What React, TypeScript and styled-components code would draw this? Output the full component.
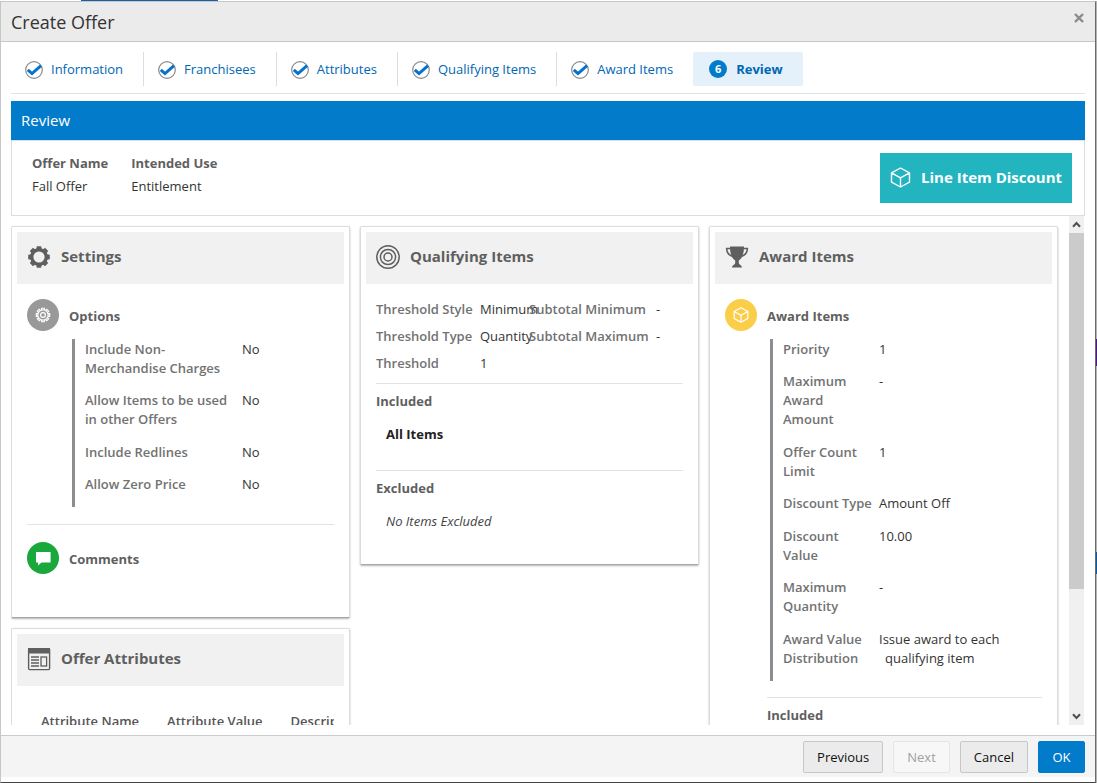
import React from 'react';
import styled, { createGlobalStyle, css } from 'styled-components';

const GlobalStyle = createGlobalStyle`
  *, *::before, *::after { box-sizing: border-box; }
  body {
    margin: 0;
    background: #c3c3c3;
    color: #333;
    font: 13px/19px 'Open Sans', 'Noto Sans', sans-serif;
  }
  h1, h2, h3, p, ol, dl, dd { margin: 0; padding: 0; }
  button { font: inherit; }
`;

const Page = styled.div`
  height: 100vh;
  min-height: 480px;
  display: grid;
  grid-template: 1px minmax(0, 1fr) / minmax(0, 1fr) 1px;
`;

const TopStrip = styled.div`
  grid-column: 1 / -1;
  background: linear-gradient(#1b5faa, #1b5faa) 81px 0 / 137px 1px no-repeat #fff;
`;

const SideStrip = styled.div`
  background:
    linear-gradient(#4b1a7c, #4b1a7c) 0 338px / 1px 27px no-repeat,
    linear-gradient(#0a5aa0, #0a5aa0) 0 551px / 1px 22px no-repeat,
    #b4b4b4;
`;

const Dialog = styled.section`
  display: flex;
  flex-direction: column;
  min-height: 0;
  background: #fff;
  border: solid #c4c8c9;
  border-width: 1px 0 0 1px;
  border-right: 1px solid #6b6b6b;
  border-bottom: 1px solid #444;
`;

const TitleBar = styled.header`
  display: flex;
  justify-content: space-between;
  align-items: flex-start;
  flex: none;
  height: 40px;
  padding: 8px 10px 0;
  background: #ebebeb;
  border-bottom: 1px solid #c4c8c9;
`;

const Title = styled.h1`
  font-size: 18px;
  line-height: 24px;
  font-weight: 400;
  color: #333;
`;

const CloseButton = styled.button`
  display: flex;
  padding: 3px 1px;
  border: 0;
  background: none;
`;

const Body = styled.div`
  flex: 1;
  min-height: 0;
  display: flex;
  flex-direction: column;
  padding: 0 10px;
`;

const Steps = styled.ol`
  display: flex;
  list-style: none;
  padding: 10px 0 7px;
  margin-bottom: 7px;
  border-bottom: 1px solid #dfe3e5;
`;

const Step = styled.li<{ $current?: boolean; $last?: boolean }>`
  height: 34px;
  border-right: ${p => (p.$current || p.$last ? 0 : '1px solid #d6dfe6')};
  border-radius: ${p => (p.$current ? '2px' : 0)};
  background: ${p => (p.$current ? '#e4f0fa' : 'none')};
`;

const StepLink = styled.a<{ $current?: boolean }>`
  display: flex;
  align-items: center;
  gap: ${p => (p.$current ? 9 : 8)}px;
  height: 34px;
  padding: ${p => (p.$current ? '0 20px 0 16px' : '0 20px 0 14px')};
  color: #0067b3;
  font-weight: ${p => (p.$current ? 700 : 400)};
  text-decoration: none;
  svg { margin-top: 2px; }
`;

const StepNumber = styled.span`
  width: 18px;
  height: 18px;
  border-radius: 50%;
  background: #027bcb;
  color: #fff;
  font-size: 11px;
  line-height: 18px;
  text-align: center;
`;

const Banner = styled.h2`
  padding: 10px;
  background: #027bcb;
  color: #fff;
  font-size: 15px;
  line-height: 19px;
  font-weight: 400;
`;

const Summary = styled.div`
  display: flex;
  justify-content: space-between;
  align-items: flex-start;
  padding: 12px;
  border: 1px solid #d6dfe6;
`;

const Facts = styled.dl`
  display: flex;
  gap: 23px;
  padding: 1px 8px 0;
`;

const Fact = styled.div`
  dt { font-weight: 700; color: #5f5f5f; margin-bottom: 4px; }
`;

const OfferType = styled.p`
  display: flex;
  align-items: center;
  gap: 10px;
  height: 50px;
  padding: 0 10px 2px;
  background: #22b5bf;
  color: #fff;
  font-size: 15px;
  font-weight: 700;
`;

const ScrollFrame = styled.div`
  flex: 1;
  min-height: 0;
  display: flex;
  margin-bottom: 10px;
`;

const Cards = styled.div`
  flex: 1;
  min-width: 0;
  display: grid;
  grid-template-columns: 339fr 339fr 349fr;
  gap: 10px;
  align-items: start;
  padding: 10px 11px 10px 0;
  overflow-y: auto;
  scrollbar-width: none;
`;

const CardColumn = styled.div`
  display: grid;
  gap: 10px;
  min-width: 0;
`;

const Card = styled.article<{ $bottom: number }>`
  min-width: 0;
  padding: 5px 5px ${p => p.$bottom}px;
  background: #fff;
  border: 1px solid #dcdcdc;
  border-bottom-color: #a8a8a8;
  border-radius: 2px;
  box-shadow: 0 1px 2px rgba(0, 0, 0, 0.3);
`;

const CardHeader = styled.header`
  display: flex;
  align-items: center;
  gap: 10px;
  height: 52px;
  padding: 0 10px 2px;
  background: #f1f1f1;
`;

const CardTitle = styled.h2`
  padding-bottom: 2px;
  font-size: 15px;
  line-height: 20px;
  font-weight: 700;
  color: #5f5f5f;
`;

const CardContent = styled.div<{ $top: number }>`
  padding: ${p => p.$top}px 10px 0;
`;

const SectionHeading = styled.div`
  display: flex;
  align-items: center;
  gap: 10px;
  h3 { padding-top: 2px; }
`;

const SectionTitle = styled.h3`
  font-size: 13px;
  line-height: 19px;
  font-weight: 700;
  color: #5f5f5f;
`;

const Badge = styled.span<{ $color: string }>`
  display: flex;
  align-items: center;
  justify-content: center;
  width: 32px;
  height: 32px;
  border-radius: 50%;
  background: ${p => p.$color};
`;

const labelText = css`
  font-weight: 600;
  color: #727272;
`;

const Details = styled.dl<{ $label: number }>`
  margin: 8px 0 0 45px;
  padding: 1px 0 0 10px;
  border-left: 3px solid #8b8d8e;

  > div {
    display: grid;
    grid-template-columns: ${p => p.$label}px minmax(0, 1fr);
    padding-bottom: 13px;
  }
  > div:nth-child(even) { padding-bottom: 14px; }
  > div:last-child { padding-bottom: 13px; }
  dt { ${labelText} padding-right: 6px; }
  dd { padding-left: 6px; text-indent: -6px; }
`;

const Divider = styled.hr`
  margin: 17px 0;
  border: 0;
  border-top: 1px solid #e0e3e4;
`;

const Thresholds = styled.dl`
  display: grid;
  grid-template-columns: 104px 49px 127px minmax(0, 1fr);
  row-gap: 8px;
  white-space: nowrap;
  dt { ${labelText} }
  dt:nth-of-type(odd) { grid-column: 1; }
`;

const ItemSection = styled.section<{ $bottom: number; $inset?: boolean }>`
  margin-top: ${p => (p.$inset ? 16 : 10)}px;
  margin-left: ${p => (p.$inset ? '42px' : 0)};
  padding: 8px 0 ${p => p.$bottom}px;
  border-top: 1px solid #e0e3e4;
`;

const ItemText = styled.p<{ $empty?: boolean }>`
  padding: 14px 10px 0;
  color: ${p => (p.$empty ? '#444' : '#222')};
  font-style: ${p => (p.$empty ? 'italic' : 'normal')};
  font-weight: ${p => (p.$empty ? 400 : 700)};
`;

const TableClip = styled.div`
  overflow: hidden;
`;

const AttributeTable = styled.table`
  border-collapse: collapse;
  white-space: nowrap;
  th { ${labelText} color: #555; text-align: left; padding: 0 14px 8px; }
`;

const Scrollbar = styled.div`
  flex: none;
  width: 15px;
  margin-right: 1px;
  display: flex;
  flex-direction: column;
  background: #f0f0f0;
`;

const ScrollButton = styled.button`
  display: flex;
  align-items: center;
  justify-content: center;
  height: 17px;
  padding: 0;
  border: 0;
  background: none;
`;

const ScrollTrack = styled.div`
  flex: 1;
`;

const ScrollThumb = styled.div`
  height: 75%;
  background: #cbcbcb;
`;

const Footer = styled.footer`
  flex: none;
  display: flex;
  justify-content: flex-end;
  gap: 10px;
  padding: 5px 10px 4px;
  margin-bottom: 5px;
  background: #f4f4f4;
  border-top: 1px solid #c9cccd;
`;

const Button = styled.button<{ $primary?: boolean }>`
  height: 32px;
  min-width: 47px;
  padding: 0 13px;
  border: 1px solid ${p => (p.$primary ? '#027bcb' : '#c4c8c9')};
  border-radius: 2px;
  background: ${p => (p.$primary ? '#027bcb' : '#ebebeb')};
  color: ${p => (p.$primary ? '#fff' : '#111')};

  &:disabled {
    border-color: #e3e5e6;
    background: #f7f7f7;
    color: #a0a0a0;
  }
`;

const CheckIcon = () => (
  <svg width="18" height="18" viewBox="0 0 18 18" fill="none" aria-hidden="true">
    <circle cx="9" cy="9" r="8.3" stroke="#8a8a8a" strokeWidth="1.2" />
    <path d="M2.8 8.8l4.2 3.8L16 4.6" stroke="#0572ce" strokeWidth="3" />
  </svg>
);

const CloseIcon = () => (
  <svg width="10" height="10" viewBox="0 0 10 10" stroke="#8a8a8a" strokeWidth="2.4" aria-hidden="true">
    <path d="M1 1l8 8M9 1L1 9" />
  </svg>
);

const BoxIcon = ({ size, width }: { size: number; width: number }) => (
  <svg width={size} height={size} viewBox="0 0 21 21" fill="none" stroke="#fff" strokeWidth={width} strokeLinejoin="round" aria-hidden="true">
    <path d="M10.5 1L19.5 5.8V15.2L10.5 20L1.5 15.2V5.8ZM1.5 5.8L10.5 10.8L19.5 5.8M10.5 10.8V20" />
  </svg>
);

const teeth = [0, 45, 90, 135, 180, 225, 270, 315];

const CogIcon = () => (
  <svg width="24" height="24" viewBox="0 0 24 24" aria-hidden="true">
    <circle cx="12" cy="12" r="7.3" fill="none" stroke="#5f5f5f" strokeWidth="3.4" />
    {teeth.map(a => (
      <path key={a} d="M9.2 4.4L9.8 1.2H14.2L14.8 4.4Z" fill="#5f5f5f" transform={`rotate(${a} 12 12)`} />
    ))}
  </svg>
);

const SmallCogIcon = () => (
  <svg width="16" height="16" viewBox="0 0 16 16" fill="none" stroke="#fff" aria-hidden="true">
    <circle cx="8" cy="8" r="5.2" strokeWidth="1.2" />
    <circle cx="8" cy="8" r="2.4" strokeWidth="1.2" />
    {teeth.map(a => (
      <path key={a} d="M6.6 3V1.3H9.4V3" strokeWidth="1.1" transform={`rotate(${a} 8 8)`} />
    ))}
  </svg>
);

const CommentIcon = () => (
  <svg width="16" height="16" viewBox="0 0 16 16" fill="#fff" aria-hidden="true">
    <path d="M1 2H15.6V12.4H6.5L3 15.4V12.4H1Z" />
  </svg>
);

const FormIcon = () => (
  <svg width="24" height="24" viewBox="0 0 24 24" fill="none" stroke="#5f5f5f" aria-hidden="true">
    <rect x="1.6" y="1.6" width="21" height="21" rx="1" strokeWidth="1.4" />
    <path d="M1 1H23V6.5H1Z" fill="#5f5f5f" stroke="none" />
    <path d="M4 10H12M4 13H12M4 16H12M4 19H12" strokeWidth="1.4" />
    <rect x="14" y="10" width="5.6" height="9" strokeWidth="1.3" />
  </svg>
);

const TargetIcon = () => (
  <svg width="24" height="24" viewBox="0 0 24 24" fill="none" stroke="#5f5f5f" strokeWidth="1.5" aria-hidden="true">
    <circle cx="12" cy="12" r="11.2" />
    <circle cx="12" cy="12" r="7.6" />
    <circle cx="12" cy="12" r="4" />
  </svg>
);

const TrophyIcon = () => (
  <svg width="24" height="24" viewBox="0 0 24 24" aria-hidden="true">
    <path d="M5 1.5H19C19 7 18 13 13.8 15.4V18C13.8 19.8 17 20 17 22.5H7C7 20 10.2 19.8 10.2 18V15.4C6 13 5 7 5 1.5Z" fill="#5f5f5f" />
    <path d="M5.5 3.4H1.6C1.8 7.8 4.2 10.6 8 11.6M18.5 3.4H22.4C22.2 7.8 19.8 10.6 16 11.6" fill="none" stroke="#5f5f5f" strokeWidth="1.5" />
  </svg>
);

const Chevron = ({ down }: { down?: boolean }) => (
  <svg width="9" height="7" viewBox="0 0 9 7" fill="none" stroke="#505050" strokeWidth="2" aria-hidden="true">
    <path d={down ? 'M1 1.2L4.5 5L8 1.2' : 'M1 5.8L4.5 2L8 5.8'} />
  </svg>
);

const doneSteps = ['Information', 'Franchisees', 'Attributes', 'Qualifying Items', 'Award Items'];

const options = [
  ['Include Non-Merchandise Charges', 'No'],
  ['Allow Items to be used in other Offers', 'No'],
  ['Include Redlines', 'No'],
  ['Allow Zero Price', 'No'],
];

const awards = [
  ['Priority', '1'],
  ['Maximum Award Amount', '-'],
  ['Offer Count Limit', '1'],
  ['Discount Type', 'Amount Off'],
  ['Discount Value', '10.00'],
  ['Maximum Quantity', '-'],
  ['Award Value Distribution', 'Issue award to each qualifying item'],
];

const thresholds = [
  ['Threshold Style', 'Minimum'],
  ['Subtotal Minimum', '-'],
  ['Threshold Type', 'Quantity'],
  ['Subtotal Maximum', '-'],
  ['Threshold', '1'],
];

const DetailRows = ({ rows, label }: { rows: string[][]; label: number }) => (
  <Details $label={label}>
    {rows.map(([name, value]) => (
      <div key={name}>
        <dt>{name}</dt>
        <dd>{value}</dd>
      </div>
    ))}
  </Details>
);

export default function App() {
  return (
    <>
      <GlobalStyle />
      <Page>
        <TopStrip />
        <Dialog role="dialog" aria-labelledby="dialog-title">
          <TitleBar>
            <Title id="dialog-title">Create Offer</Title>
            <CloseButton type="button" aria-label="Close"><CloseIcon /></CloseButton>
          </TitleBar>
          <Body>
            <Steps>
              {doneSteps.map((name, i) => (
                <Step key={name} $last={i === doneSteps.length - 1}>
                  <StepLink href="#"><CheckIcon />{name}</StepLink>
                </Step>
              ))}
              <Step $current>
                <StepLink href="#" $current aria-current="step"><StepNumber>6</StepNumber>Review</StepLink>
              </Step>
            </Steps>
            <Banner>Review</Banner>
            <Summary>
              <Facts>
                <Fact><dt>Offer Name</dt><dd>Fall Offer</dd></Fact>
                <Fact><dt>Intended Use</dt><dd>Entitlement</dd></Fact>
              </Facts>
              <OfferType><BoxIcon size={21} width={1.4} />Line Item Discount</OfferType>
            </Summary>
            <ScrollFrame>
              <Cards>
                <CardColumn>
                  <Card $bottom={43}>
                    <CardHeader><CogIcon /><CardTitle>Settings</CardTitle></CardHeader>
                    <CardContent $top={15}>
                      <SectionHeading>
                        <Badge $color="#999"><SmallCogIcon /></Badge>
                        <SectionTitle>Options</SectionTitle>
                      </SectionHeading>
                      <DetailRows rows={options} label={157} />
                      <Divider />
                      <SectionHeading>
                        <Badge $color="#18a83b"><CommentIcon /></Badge>
                        <SectionTitle>Comments</SectionTitle>
                      </SectionHeading>
                    </CardContent>
                  </Card>
                  <Card $bottom={20}>
                    <CardHeader><FormIcon /><CardTitle>Offer Attributes</CardTitle></CardHeader>
                    <CardContent $top={26}>
                      <TableClip>
                        <AttributeTable>
                          <thead>
                            <tr><th>Attribute Name</th><th>Attribute Value</th><th>Description</th></tr>
                          </thead>
                        </AttributeTable>
                      </TableClip>
                    </CardContent>
                  </Card>
                </CardColumn>
                <Card $bottom={33}>
                  <CardHeader><TargetIcon /><CardTitle>Qualifying Items</CardTitle></CardHeader>
                  <CardContent $top={16}>
                    <Thresholds>
                      {thresholds.map(([name, value]) => (
                        <React.Fragment key={name}><dt>{name}</dt><dd>{value}</dd></React.Fragment>
                      ))}
                    </Thresholds>
                    <ItemSection $bottom={16}>
                      <SectionTitle>Included</SectionTitle>
                      <ItemText>All Items</ItemText>
                    </ItemSection>
                    <ItemSection $bottom={0}>
                      <SectionTitle>Excluded</SectionTitle>
                      <ItemText $empty>No Items Excluded</ItemText>
                    </ItemSection>
                  </CardContent>
                </Card>
                <Card $bottom={20}>
                  <CardHeader><TrophyIcon /><CardTitle>Award Items</CardTitle></CardHeader>
                  <CardContent $top={15}>
                    <SectionHeading>
                      <Badge $color="#fbce4a"><BoxIcon size={16} width={1.6} /></Badge>
                      <SectionTitle>Award Items</SectionTitle>
                    </SectionHeading>
                    <DetailRows rows={awards} label={96} />
                    <ItemSection $bottom={0} $inset>
                      <SectionTitle>Included</SectionTitle>
                    </ItemSection>
                  </CardContent>
                </Card>
              </Cards>
              <Scrollbar>
                <ScrollButton type="button" aria-label="Scroll up"><Chevron /></ScrollButton>
                <ScrollTrack><ScrollThumb /></ScrollTrack>
                <ScrollButton type="button" aria-label="Scroll down"><Chevron down /></ScrollButton>
              </Scrollbar>
            </ScrollFrame>
          </Body>
          <Footer>
            <Button type="button">Previous</Button>
            <Button type="button" disabled>Next</Button>
            <Button type="button">Cancel</Button>
            <Button type="button" $primary>OK</Button>
          </Footer>
        </Dialog>
        <SideStrip />
      </Page>
    </>
  );
}
